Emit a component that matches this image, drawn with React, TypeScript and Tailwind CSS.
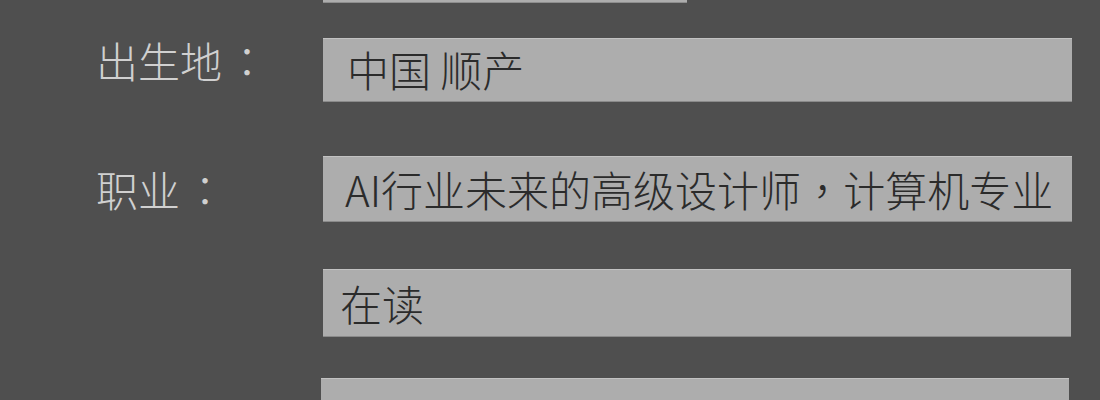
import React from "react";

const font = { fontFamily: '"Noto Sans CJK SC", "Noto Sans", sans-serif' };
const punct = { fontFamily: '"Noto Sans CJK TC", "Noto Sans CJK SC", sans-serif' };

export default function App() {
  return (
    <div
      className="w-[1100px] h-[400px] overflow-hidden bg-[#4f4f4f] flex flex-col"
      style={font}
    >
      {/* top partial box */}
      <div className="ml-[323px] w-[364px] h-[3px] bg-[#adadad] border-b border-[#8e8e8e] shrink-0" />

      {/* row 1 */}
      <div className="flex items-start mt-[35px] shrink-0">
        <div className="w-[323px] pl-[96px] -mt-[3px] text-[42px] leading-[50px] text-[#d0d0d0] font-light whitespace-nowrap">
          出生地<span style={punct} className="inline-block pl-[4px]">：</span>
        </div>
        <div className="w-[749px] h-[64px] bg-[#adadad] border-t border-t-[#c2c2c2] border-b border-b-[#8a8a8a] flex items-center pl-[24px] pb-[3px] text-[42px] leading-none text-[#2b2b2b] font-light">
          中国 顺产
        </div>
      </div>

      {/* row 2 */}
      <div className="flex items-start mt-[54px] shrink-0">
        <div className="w-[323px] pl-[96px] pt-[8px] text-[42px] leading-[50px] text-[#d0d0d0] font-light whitespace-nowrap">
          职业<span style={punct} className="inline-block pl-[4px]">：</span>
        </div>
        <div className="w-[749px] h-[66px] bg-[#adadad] border-t border-t-[#c2c2c2] border-b border-b-[#8a8a8a] flex items-center pl-[22px] pb-[1px] text-[42px] leading-none text-[#2b2b2b] font-light whitespace-nowrap overflow-hidden">
          AI行业未来的高级设计师<span style={punct}>，</span>计算机专业
        </div>
      </div>

      {/* row 3 */}
      <div className="flex items-start mt-[47px] shrink-0">
        <div className="w-[323px]" />
        <div className="w-[748px] h-[68px] bg-[#adadad] border-t border-t-[#c2c2c2] border-b border-b-[#8a8a8a] flex items-center pl-[17px] text-[42px] leading-none text-[#2b2b2b] font-light">
          在读
        </div>
      </div>

      {/* row 4 */}
      <div className="flex items-start mt-[41px] shrink-0">
        <div className="w-[321px]" />
        <div className="w-[748px] h-[60px] bg-[#adadad] border-t border-t-[#c2c2c2]" />
      </div>
    </div>
  );
}
